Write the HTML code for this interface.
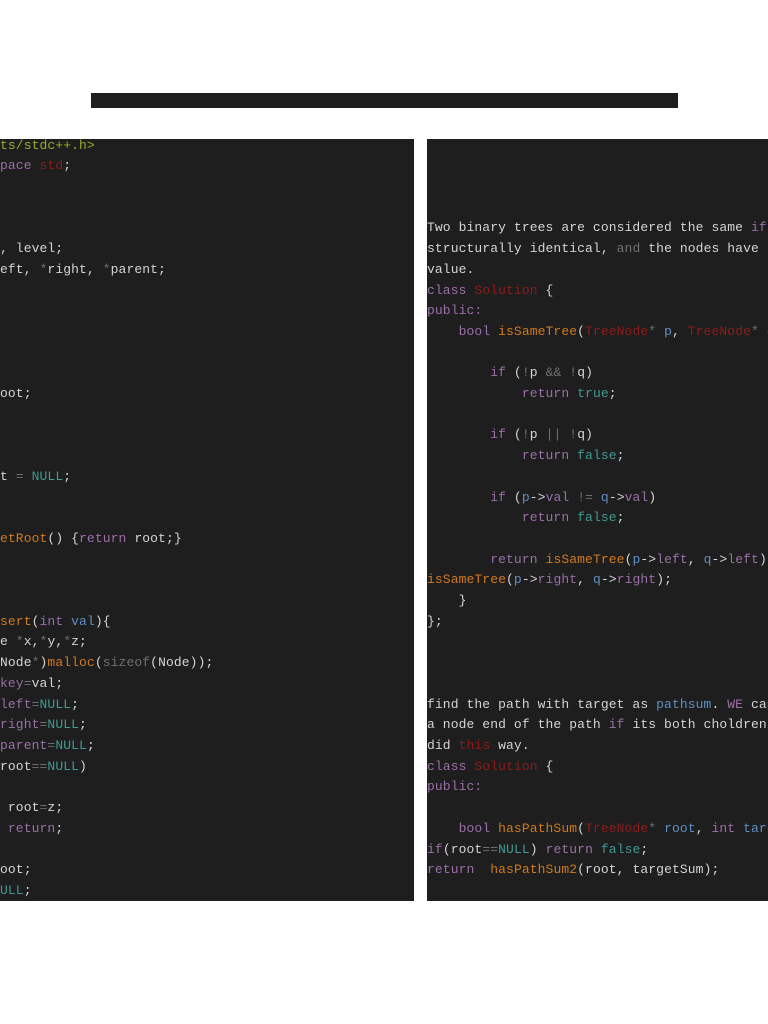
<!DOCTYPE html>
<html><head><meta charset="utf-8"><style>
html,body{margin:0;padding:0;background:#fff;width:768px;height:1024px;overflow:hidden;position:relative}
.bar{position:absolute;left:91px;top:93px;width:587px;height:15px;background:#1e1e1e}
.p{position:absolute;top:139px;height:762px;background:#1e1e1e;overflow:hidden}
pre{position:absolute;margin:0;top:-3.4px;left:0;font-family:"Liberation Mono",monospace;font-size:13px;letter-spacing:0.1px;line-height:20.7px;color:#d4d4d4;white-space:pre}
.k{color:#9a6fa6}.r{color:#8e1b1b}.o{color:#d07a1e}.t{color:#3f9a92}.b{color:#5f8fc4}.g{color:#9aab2a}.y{color:#6f6f6f}
</style></head><body>
<div class="bar"></div>
<div class="p" style="left:0;width:414px"><pre><span class="g">ts/stdc++.h&gt;</span>
<span class="k">pace</span> <span class="r">std</span>;



, level;
eft, <span class="y">*</span>right, <span class="y">*</span>parent;





oot;



t <span class="y">=</span> <span class="t">NULL</span>;


<span class="o">etRoot</span>() {<span class="k">return</span> root;}



<span class="o">sert</span>(<span class="k">int</span> <span class="b">val</span>){
e <span class="y">*</span>x,<span class="y">*</span>y,<span class="y">*</span>z;
Node<span class="y">*</span>)<span class="o">malloc</span>(<span class="y">sizeof</span>(Node));
<span class="k">key</span><span class="y">=</span>val;
<span class="k">left</span><span class="y">=</span><span class="t">NULL</span>;
<span class="k">right</span><span class="y">=</span><span class="t">NULL</span>;
<span class="k">parent</span><span class="y">=</span><span class="t">NULL</span>;
root<span class="y">==</span><span class="t">NULL</span>)

 root<span class="y">=</span>z;
 <span class="k">return</span>;

oot;
<span class="t">ULL</span>;</pre></div>
<div class="p" style="left:427px;width:341px"><pre>




Two binary trees are considered the same <span class="k">if</span> they are
structurally identical, <span class="y">and</span> the nodes have the same
value.
<span class="k">class</span> <span class="r">Solution</span> {
<span class="k">public:</span>
    <span class="k">bool</span> <span class="o">isSameTree</span>(<span class="r">TreeNode</span><span class="y">*</span> <span class="b">p</span>, <span class="r">TreeNode</span><span class="y">*</span> <span class="b">q</span>) {

        <span class="k">if</span> (<span class="y">!</span>p <span class="y">&amp;&amp;</span> <span class="y">!</span>q)
            <span class="k">return</span> <span class="t">true</span>;

        <span class="k">if</span> (<span class="y">!</span>p <span class="y">||</span> <span class="y">!</span>q)
            <span class="k">return</span> <span class="t">false</span>;

        <span class="k">if</span> (<span class="b">p</span>-&gt;<span class="k">val</span> <span class="y">!=</span> <span class="b">q</span>-&gt;<span class="k">val</span>)
            <span class="k">return</span> <span class="t">false</span>;

        <span class="k">return</span> <span class="o">isSameTree</span>(<span class="b">p</span>-&gt;<span class="k">left</span>, <span class="b">q</span>-&gt;<span class="k">left</span>) <span class="y">&amp;&amp;</span>
<span class="o">isSameTree</span>(<span class="b">p</span>-&gt;<span class="k">right</span>, <span class="b">q</span>-&gt;<span class="k">right</span>);
    }
};



find the path with target as <span class="b">pathsum</span>. <span class="k">WE</span> can say
a node end of the path <span class="k">if</span> its both choldren are
did <span class="r">this</span> way.
<span class="k">class</span> <span class="r">Solution</span> {
<span class="k">public:</span>

    <span class="k">bool</span> <span class="o">hasPathSum</span>(<span class="r">TreeNode</span><span class="y">*</span> <span class="b">root</span>, <span class="k">int</span> <span class="b">targetSum</span>) {
<span class="k">if</span>(root<span class="y">==</span><span class="t">NULL</span>) <span class="k">return</span> <span class="t">false</span>;
<span class="k">return</span>  <span class="o">hasPathSum2</span>(root, targetSum);</pre></div>
</body></html>
